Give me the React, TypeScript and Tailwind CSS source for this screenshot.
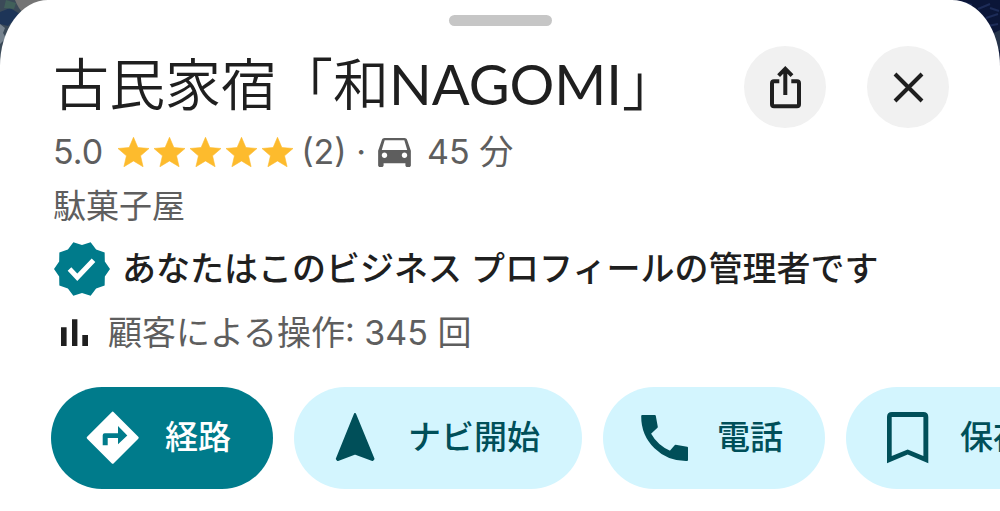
import React from 'react'

const badgePoints = Array.from({ length: 20 }, (_, i) => {
  const r = i % 2 === 0 ? 28 : 24
  const a = (i * Math.PI) / 10
  return `${(28 + r * Math.cos(a)).toFixed(2)},${(28 + r * Math.sin(a)).toFixed(2)}`
}).join(' ')

const Star = () => (
  <svg className="w-[31px] h-[30px]" viewBox="2 2 20 19" fill="#fdbb2d" stroke="#fdbb2d" strokeWidth="0.4" strokeLinejoin="round">
    <path d="M12 17.27L18.18 21l-1.64-7.03L22 9.24l-7.19-.61L12 2 9.19 8.63 2 9.24l5.46 4.73L5.82 21z" />
  </svg>
)

const CarIcon = () => (
  <svg className="w-[33px] h-[30px]" viewBox="3 4.5 18 16.5" fill="currentColor">
    <path d="M18.92 6.01C18.72 5.42 18.16 5 17.5 5h-11c-.66 0-1.21.42-1.42 1.01L3 12v8c0 .55.45 1 1 1h1c.55 0 1-.45 1-1v-1h12v1c0 .55.45 1 1 1h1c.55 0 1-.45 1-1v-8l-2.08-5.99zM6.5 16c-.83 0-1.5-.67-1.5-1.5S5.67 13 6.5 13s1.5.67 1.5 1.5S7.33 16 6.5 16zm11 0c-.83 0-1.5-.67-1.5-1.5s.67-1.5 1.5-1.5 1.5.67 1.5 1.5-.67 1.5-1.5 1.5zM5 11.6l1.6-5.3h10.8L19 11.6H5z" />
  </svg>
)

const RouteIcon = () => (
  <svg className="size-14 shrink-0" viewBox="0 0 56 56">
    <path
      d="M27.7 3.2L52.2 27.7 27.7 52.2 3.2 27.7z"
      fill="#fff"
      stroke="#fff"
      strokeWidth="3"
      strokeLinejoin="round"
    />
    <path d="M17.7 35.3V25.3Q17.7 23.3 19.7 23.3H33V16L42.3 25.5 33 34.3V28H22.7V35.3z" fill="#007b8b" />
  </svg>
)

const NavIcon = () => (
  <svg className="size-14 shrink-0" viewBox="0 0 56 56" fill="currentColor" stroke="currentColor" strokeWidth="2" strokeLinejoin="round">
    <path d="M27 4L8.8 48.8 9.8 50 27 43.5 44.6 50 45.5 48.8z" />
  </svg>
)

const PhoneIcon = () => (
  <svg className="size-14 shrink-0" viewBox="0 0 56 56" fill="currentColor" stroke="currentColor" strokeWidth="2" strokeLinejoin="round">
    <path d="M5.2 6H17.8L19.8 17 12.8 23.6C17.5 32 24 38.2 33.2 42L38.4 35.8 50 37.8V50C25 50.5 5 31 5.2 6z" />
  </svg>
)

const SaveIcon = () => (
  <svg className="size-14 shrink-0" viewBox="0 0 56 56" fill="currentColor" fillRule="evenodd">
    <path d="M12 2H43.3Q48.3 2 48.3 7V53.3L27.7 44.5 7 53.3V7Q7 2 12 2zM11.7 7V46L27.7 39.5 43.4 46V7z" />
  </svg>
)

const chips = [
  { label: '経路', icon: <RouteIcon />, style: 'bg-[#007b8b] text-white' },
  { label: 'ナビ開始', icon: <NavIcon />, style: 'bg-[#d3f5fe] text-[#004f59]' },
  { label: '電話', icon: <PhoneIcon />, style: 'bg-[#d3f5fe] text-[#004f59]' },
  { label: '保存', icon: <SaveIcon />, style: 'bg-[#d3f5fe] text-[#004f59]' },
]

const App = () => {
  return (
    <div className="relative isolate overflow-hidden bg-[#0b1638] font-['Inter','Noto_Sans_CJK_JP',sans-serif]" lang="ja">
      {/* Map imagery behind the sheet corners */}
      <svg className="absolute top-0 left-0 -z-10 w-12 h-20" viewBox="0 0 48 80">
        <rect width="48" height="80" fill="#3b4a58" />
        <path d="M0 12L10 8 20 14 8 26 0 24z" fill="#1d3558" />
        <path d="M6 0L16 3 14 9 4 8z" fill="#41605a" />
        <path d="M0 24l5 4-2 5 3 5-6 6z" fill="#76838f" />
        <path d="M15 0H48V8L24 14Q18 8 15 0z" fill="#747474" />
      </svg>
      <svg className="absolute top-0 right-0 -z-10 w-12 h-20" viewBox="0 0 48 80">
        <rect width="48" height="80" fill="#0b1638" />
        <path d="M8 2L20 5M26 9l12-5M34 18l12-4M38 8l9 3M36 26l10-2" stroke="#1d2c58" strokeWidth="2" />
        <path d="M40 34l8-4v20h-4z" fill="#26344a" />
      </svg>

      <main className="min-h-screen bg-white rounded-[48px_48px_0_0/66px_66px_0_0] pt-[15px] pb-[22px]">
        <div className="w-[103px] h-[11px] mx-auto rounded-full bg-[#c6c6c6]" />

        <div className="pl-[53px] pr-[51px] text-[34px] leading-[48px] text-[#5e5e5e]">
          <header className="flex items-start justify-between mt-5">
            <h1 className="text-[56px] leading-[76px] font-[350] text-[#1f1f1f] whitespace-nowrap font-['Lato','Noto_Sans_CJK_JP',sans-serif]">
              古民家宿「和<span className="font-normal">NAGOMI</span>」
            </h1>
            <div className="flex gap-[41px]">
              <button aria-label="共有" className="size-[82px] rounded-full bg-[#f1f1f1] text-[#1f1f1f]">
                <svg viewBox="0 0 82 82" fill="none" stroke="currentColor" strokeWidth="4">
                  <path d="M35.3 35.3H30Q28 35.3 28 37.3V58.3Q28 60.3 30 60.3H53Q55 60.3 55 58.3V37.3Q55 35.3 53 35.3H47.3" />
                  <path d="M41.3 49V23M34.6 29.6L41.3 22.9 48 29.6" />
                </svg>
              </button>
              <button aria-label="閉じる" className="size-[82px] rounded-full bg-[#f1f1f1] text-[#1f1f1f]">
                <svg viewBox="0 0 82 82" fill="none" stroke="currentColor" strokeWidth="4">
                  <path d="M28 28L55 55M55 28L28 55" />
                </svg>
              </button>
            </div>
          </header>

          <div className="flex items-center">
            <span>5.0</span>
            <div className="flex gap-[5px] ml-[15px] mr-2" role="img" aria-label="星 5 つ">
              <Star />
              <Star />
              <Star />
              <Star />
              <Star />
            </div>
            <span>(2) ·</span>
            <span className="ml-3 mr-4">
              <CarIcon />
            </span>
            <span>45 分</span>
          </div>

          <p className="mt-1.5 text-[33px]">駄菓子屋</p>

          <div className="flex items-center gap-3 mt-[11px] font-medium text-[#1f1f1f]">
            <svg className="size-14 ml-px" viewBox="0 0 56 56">
              <polygon points={badgePoints} fill="#007b8b" />
              <path d="M15.5 28L23.3 36.3 39.5 19.3" fill="none" stroke="#fff" strokeWidth="5" />
            </svg>
            <p>あなたはこのビジネス プロフィールの管理者です</p>
          </div>

          <div className="flex items-center gap-[15px] mt-3">
            <svg className="w-10 h-10" viewBox="2 0 40 40" fill="#1f1f1f">
              <path d="M10 14.3h5.6V33H10zM21 6.3h5.4V33H21zM31.3 22H37v11h-5.7z" />
            </svg>
            <p>顧客による操作: 345 回</p>
          </div>
        </div>

        <nav className="flex gap-[21px] mt-[30px] pl-[51px] overflow-hidden">
          {chips.map((chip) => (
            <button
              key={chip.label}
              className={`flex shrink-0 items-center gap-6 h-[102px] pl-[34px] pr-[42px] rounded-full text-[33px] font-medium ${chip.style}`}
            >
              {chip.icon}
              {chip.label}
            </button>
          ))}
        </nav>
      </main>
    </div>
  )
}

export default App
